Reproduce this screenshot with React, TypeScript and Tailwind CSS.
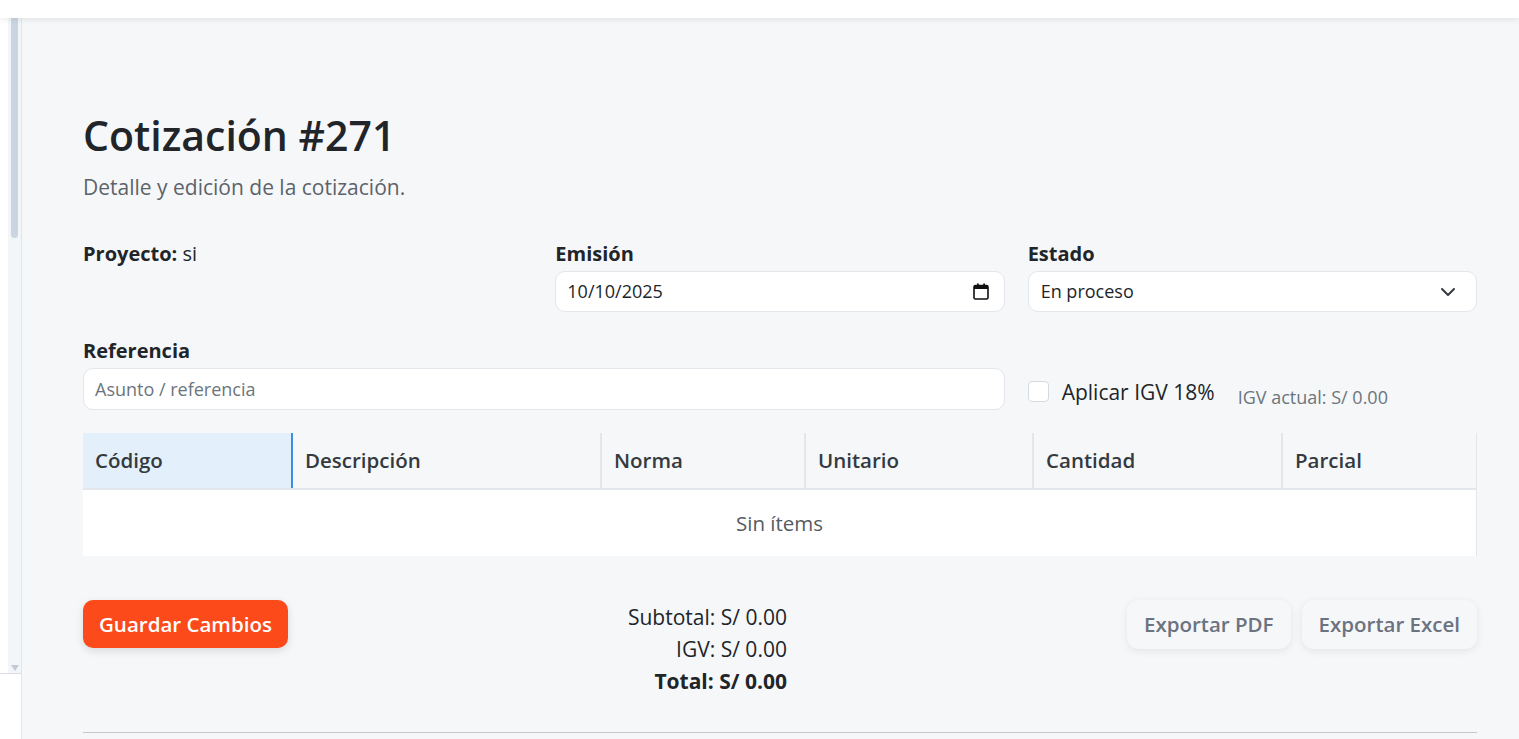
import React from 'react';

const font = { fontFamily: '"Open Sans", "Noto Sans", Arial, sans-serif' };

const columns = [
  { label: 'Código', w: 'w-[210px]', active: true },
  { label: 'Descripción', w: 'w-[309px]' },
  { label: 'Norma', w: 'w-[204px]' },
  { label: 'Unitario', w: 'w-[228px]' },
  { label: 'Cantidad', w: 'w-[249px]' },
  { label: 'Parcial', w: 'flex-1' },
];

const CalendarIcon = () => (
  <svg width="16" height="17" viewBox="0 0 16 17" fill="none" aria-hidden="true">
    <rect x="1" y="2.5" width="14" height="13.5" rx="1.5" stroke="#111" strokeWidth="1.6" />
    <rect x="1" y="2.5" width="14" height="3.5" fill="#111" />
    <rect x="4" y="0.5" width="1.8" height="3" fill="#111" />
    <rect x="10.2" y="0.5" width="1.8" height="3" fill="#111" />
  </svg>
);

const ChevronDown = () => (
  <svg width="16" height="10" viewBox="0 0 16 10" fill="none" aria-hidden="true">
    <path d="M2 2l6 6 6-6" stroke="#343a40" strokeWidth="2" strokeLinecap="round" strokeLinejoin="round" />
  </svg>
);

const Sidebar = () => (
  <aside className="flex w-[22px] shrink-0 flex-col border-r border-[#e2e5e9] bg-white">
    <div className="flex h-[655px]">
      <div className="w-[8px] bg-white" />
      <div className="flex w-[13px] flex-col items-center bg-[#f3f6f9]">
        <div className="h-[220px] w-[7px] rounded-b-full bg-[#cbd5e1]" />
        <div className="flex-1" />
        <div className="mb-[2px] h-0 w-0 border-x-[4px] border-t-[6px] border-x-transparent border-t-[#c3cad4]" />
      </div>
    </div>
    <div className="flex-1 border-t border-[#d9dde2] bg-white" />
  </aside>
);

const Field = ({ label, children }: { label: string; children: React.ReactNode }) => (
  <div className="flex flex-col">
    <label className="text-[20px] font-bold leading-[28px] text-[#212529]">{label}</label>
    <div className="mt-[3px]">{children}</div>
  </div>
);

export default function App() {
  return (
    <div className="flex min-h-screen flex-col bg-[#f6f7f9]" style={font}>
      <header className="relative z-10 h-[18px] bg-white shadow-[0_2px_6px_rgba(0,0,0,0.08)]" />
      <div className="flex flex-1">
        <Sidebar />
        <main className="flex-1 pl-[61px] pr-[42px] pt-[92px]">
          <h1 className="text-[41px] font-semibold leading-[50px] text-[#212529]">Cotización #271</h1>
          <p className="mt-[13px] text-[21px] leading-[28px] text-[#5c636a]">Detalle y edición de la cotización.</p>

          <div className="mt-[39px] grid grid-cols-3 gap-x-[23px] gap-y-[25px]">
            <div className="text-[20px] leading-[28px] text-[#212529]">
              <span className="font-bold">Proyecto:</span> si
            </div>
            <Field label="Emisión">
              <div className="flex h-[41px] items-center justify-between rounded-[10px] border border-[#e3e6ea] bg-white pl-[11px] pr-[15px] text-[18px] text-[#212529]">
                <span>10/10/2025</span>
                <CalendarIcon />
              </div>
            </Field>
            <Field label="Estado">
              <div className="flex h-[41px] items-center justify-between rounded-[10px] border border-[#e3e6ea] bg-white pl-[12px] pr-[20px] text-[18px] text-[#212529]">
                <span>En proceso</span>
                <ChevronDown />
              </div>
            </Field>

            <div className="col-span-2">
              <Field label="Referencia">
                <div className="flex h-[42px] items-center rounded-[10px] border border-[#e3e6ea] bg-white px-[11px] text-[18px] text-[#6c757d]">
                  Asunto / referencia
                </div>
              </Field>
            </div>
            <div className="flex h-[37px] items-center self-end">
              <span className="h-[21px] w-[21px] rounded-[4px] border border-[#d6dadf] bg-white" />
              <span className="ml-[13px] text-[21px] leading-[28px] text-[#212529]">Aplicar IGV 18%</span>
              <span className="ml-[23px] mt-[11px] text-[18px] leading-[24px] text-[#6c757d]">IGV actual: S/ 0.00</span>
            </div>
          </div>

          <div className="mt-[23px] border-r border-[#e3e6ea]">
            <div className="flex h-[57px] border-b-2 border-[#e3e6ea]">
              {columns.map((c, i) => (
                <div
                  key={c.label}
                  className={`${c.w} flex items-center px-[12px] text-[20.5px] font-semibold text-[#343a40] ${
                    c.active
                      ? 'border-r-2 border-[#3b8ee8] bg-[#e3f0fc]'
                      : i < columns.length - 1
                        ? 'border-r-2 border-[#e3e6ea]'
                        : ''
                  }`}
                >
                  {c.label}
                </div>
              ))}
            </div>
            <div className="flex h-[66px] items-center justify-center bg-white text-[20.5px] text-[#555b61]">Sin ítems</div>
          </div>

          <div className="mt-[44px] flex items-start justify-between">
            <button className="h-[48px] rounded-[10px] bg-[#fc4a1a] px-[16px] text-[20.5px] font-semibold text-white shadow-[0_3px_8px_rgba(0,0,0,0.12)]">
              Guardar Cambios
            </button>
            <div className="mt-[1px] text-right text-[21px] leading-[32px] text-[#212529]">
              <div>Subtotal: S/ 0.00</div>
              <div>IGV: S/ 0.00</div>
              <div className="font-bold">Total: S/ 0.00</div>
            </div>
            <div className="flex gap-[11px]">
              <button className="h-[49px] rounded-[12px] bg-[#f6f7f9] px-[17px] text-[20.5px] font-semibold text-[#6b7280] shadow-[0_2px_8px_rgba(0,0,0,0.08)]">
                Exportar PDF
              </button>
              <button className="h-[49px] rounded-[12px] bg-[#f6f7f9] px-[17px] text-[20.5px] font-semibold text-[#6b7280] shadow-[0_2px_8px_rgba(0,0,0,0.08)]">
                Exportar Excel
              </button>
            </div>
          </div>

          <hr className="mt-[35px] border-t border-[#c4c7cc]" />
        </main>
      </div>
    </div>
  );
}
